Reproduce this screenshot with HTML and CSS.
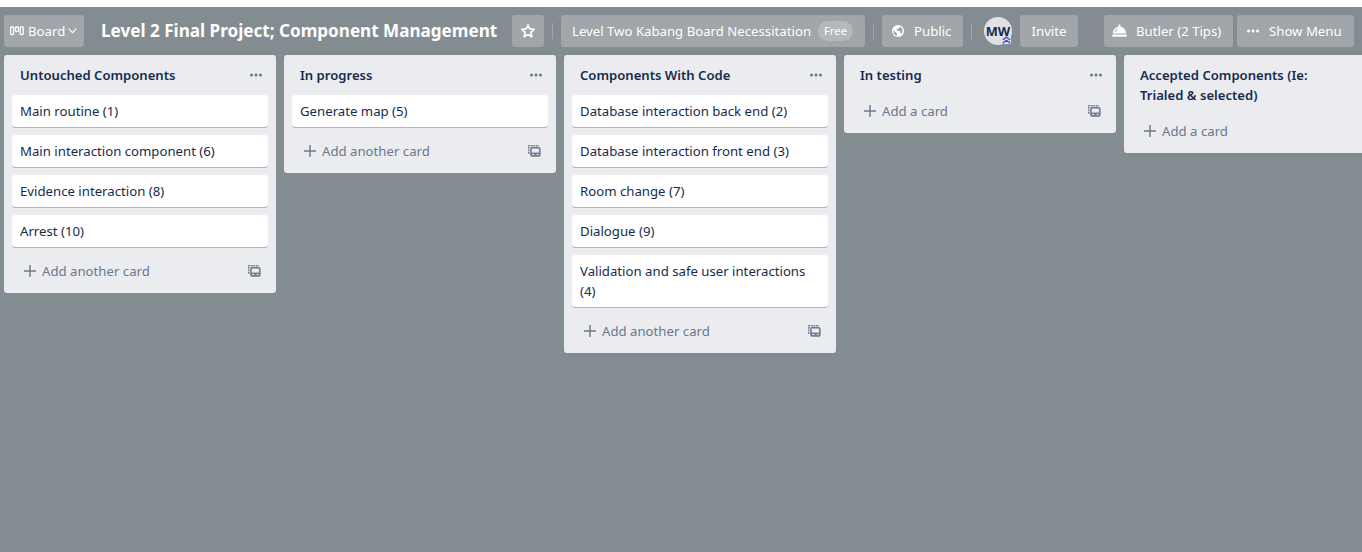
FILE: index.html
```html
<!DOCTYPE html>
<html lang="en">
<head>
<meta charset="utf-8">
<title>Level 2 Final Project; Component Management</title>
<link rel="stylesheet" href="styles.css">
</head>
<body>
<svg class="defs" width="0" height="0" aria-hidden="true">
  <symbol id="dots" viewBox="0 0 14 4"><circle cx="2.5" cy="2" r="1.5"/><circle cx="7" cy="2" r="1.5"/><circle cx="11.5" cy="2" r="1.5"/></symbol>
  <symbol id="plus" viewBox="0 0 12 12"><path d="M6 0v12M0 6h12" fill="none" stroke="currentColor" stroke-width="1.4"/></symbol>
  <symbol id="template" viewBox="0 0 13 12">
    <path d="M.8 8.7V.8H11" fill="none" stroke="currentColor" stroke-width="1.4" stroke-dasharray="1.7 .8"/>
    <rect x="2.9" y="2.7" width="9" height="8.2" rx="1.2" fill="none" stroke="currentColor" stroke-width="1.5"/>
    <path d="M3 7.6h9v3.2H3z" fill="currentColor"/>
    <path d="M4.2 8.9h2.2v1H4.2zM8.6 8.9h2.2v1H8.6z" fill="#ebecf0"/>
  </symbol>
</svg>
<header class="bar">
  <button class="btn btn-board">
    <svg width="14" height="11" viewBox="0 0 14 11" fill="none" stroke="currentColor" stroke-width="1.3"><rect x=".7" y="1" width="2.9" height="7.6" rx=".8"/><rect x="5.5" y="1" width="2.9" height="4.6" rx=".8"/><rect x="10.3" y="1" width="2.9" height="7.6" rx=".8"/></svg>
    <span class="lbl-board">Board</span>
    <svg width="9" height="6" viewBox="0 0 9 6" fill="none" stroke="currentColor" stroke-width="1.1"><path d="M.6.7 4.5 4.6 8.4.7"/></svg>
  </button>
  <h1 class="title">Level 2 Final Project; Component Management</h1>
  <button class="btn btn-star"><svg width="16" height="16" viewBox="0 0 16 16" fill="none" stroke="currentColor" stroke-width="1.7" stroke-linejoin="round"><path d="m8 1.800 1.750 4 4.450.5-3.300 3 .95 4.400L8 11.500l-3.850 2.200.95-4.400-3.300-3 4.450-.5z"/></svg></button>
  <i class="divider"></i>
  <button class="btn btn-team"><span class="lbl-team">Level Two Kabang Board Necessitation</span><span class="pill">Free</span></button>
  <i class="divider"></i>
  <button class="btn btn-public">
    <svg width="12" height="12" viewBox="0 0 12 12"><circle cx="6" cy="6" r="6" fill="currentColor"/><path d="M1.200 5 4.800 8.300v2.500C2.500 10.400 1 8.300 1.200 5zM7.600 1.500 7.300 3.200 4.700 3.900 4.600 5.400 7.800 6l.6 2 1.400.5c1.600-2.300 1.100-5.500-2.200-7z" fill="#a0a6a9"/></svg>
    <span class="lbl-public">Public</span>
  </button>
  <i class="divider"></i>
  <div class="avatar">MW<svg class="rank" width="9" height="8" viewBox="0 0 9 8"><path d="M0 0h9v8H0z" fill="#dfe1e6"/><path d="m.8 4 3.700-2.900L8.200 4M.8 7.200l3.700-2.900 3.700 2.900" fill="none" stroke="#4a3fb5" stroke-width="1.300"/></svg></div>
  <button class="btn btn-invite"><span class="lbl-invite">Invite</span></button>
  <button class="btn btn-butler">
    <svg width="15" height="14" viewBox="0 0 15 14" fill="currentColor"><path d="M.9 9.400C1.100 5.900 3.300 3.300 6.400 2.800V1.400q0-1 1.100-1t1.100 1v1.400c3.100.5 5.300 3.100 5.500 6.600zM.3 10.500h14.400v2.300H.3z"/><path d="M3.300 7.700C3.700 6.300 4.500 5.300 5.700 4.700" fill="none" stroke="#a0a6a9" stroke-width="1"/></svg>
    <span class="lbl-butler">Butler (2 Tips)</span>
  </button>
  <button class="btn btn-menu"><svg width="14" height="4" fill="currentColor"><use href="#dots"/></svg><span class="lbl-menu">Show Menu</span></button>
</header>
<main class="board">
  <section class="list">
    <div class="head"><h2>Untouched Components</h2><svg class="more"><use href="#dots"/></svg></div>
    <div class="card">Main routine (1)</div>
    <div class="card">Main interaction component (6)</div>
    <div class="card">Evidence interaction (8)</div>
    <div class="card">Arrest (10)</div>
    <div class="foot"><svg class="plus"><use href="#plus"/></svg><span>Add another card</span><svg class="tpl"><use href="#template"/></svg></div>
  </section>
  <section class="list">
    <div class="head"><h2>In progress</h2><svg class="more"><use href="#dots"/></svg></div>
    <div class="card">Generate map (5)</div>
    <div class="foot"><svg class="plus"><use href="#plus"/></svg><span>Add another card</span><svg class="tpl"><use href="#template"/></svg></div>
  </section>
  <section class="list">
    <div class="head"><h2>Components With Code</h2><svg class="more"><use href="#dots"/></svg></div>
    <div class="card">Database interaction back end (2)</div>
    <div class="card">Database interaction front end (3)</div>
    <div class="card">Room change (7)</div>
    <div class="card">Dialogue (9)</div>
    <div class="card">Validation and safe user interactions (4)</div>
    <div class="foot"><svg class="plus"><use href="#plus"/></svg><span>Add another card</span><svg class="tpl"><use href="#template"/></svg></div>
  </section>
  <section class="list">
    <div class="head"><h2>In testing</h2><svg class="more"><use href="#dots"/></svg></div>
    <div class="foot"><svg class="plus"><use href="#plus"/></svg><span>Add a card</span><svg class="tpl"><use href="#template"/></svg></div>
  </section>
  <section class="list">
    <div class="head"><h2>Accepted Components (Ie: Trialed &amp; selected)</h2><svg class="more"><use href="#dots"/></svg></div>
    <div class="foot"><svg class="plus"><use href="#plus"/></svg><span>Add a card</span><svg class="tpl"><use href="#template"/></svg></div>
  </section>
</main>
</body>
</html>
```
FILE: styles.css
```css
* { box-sizing: border-box; }
body {
  margin: 0;
  height: 552px;
  overflow: hidden;
  border-top: 7px solid #fff;
  background: #838c91;
  color: #172b4d;
  font: 13.2px/20px "Noto Sans", "Open Sans", sans-serif;
}
.defs { position: absolute; }
svg { flex: none; display: block; }
.bar {
  display: flex;
  align-items: center;
  height: 48px;
  padding: 0 8px 0 4px;
  color: #fff;
}
.btn {
  display: flex;
  align-items: center;
  flex: none;
  height: 32px;
  padding: 0;
  border: 0;
  border-radius: 3px;
  background: #a0a6a9;
  color: #fff;
  font: inherit;
  white-space: nowrap;
}
.btn-board { width: 80px; padding-left: 6px; }
.lbl-board { width: 40px; margin-left: 4px; text-align: left; }
.title {
  width: 396px;
  margin: 0 16px;
  padding-left: 1px;
  font-size: 17.1px;
  font-weight: 700;
  line-height: 32px;
  white-space: nowrap;
}
.btn-star { width: 32px; justify-content: center; }
.divider { flex: none; width: 1px; height: 16px; margin: 0 8px; background: #a0a6a9; }
.btn-team { width: 304px; padding-left: 11px; }
.lbl-team { width: 246px; text-align: left; }
.pill {
  width: 35px;
  height: 20px;
  border-radius: 10px;
  background: #b3b8ba;
  font-size: 11.4px;
  line-height: 20px;
  text-align: center;
}
.btn-public { width: 81px; padding-left: 10px; gap: 10px; }
.avatar {
  position: relative;
  flex: none;
  width: 28px;
  height: 28px;
  margin: 0 8px 0 4px;
  border-radius: 50%;
  background: #dfe1e6;
  color: #172b4d;
  font-size: 12.8px;
  font-weight: 700;
  line-height: 28px;
  text-align: center;
}
.rank { position: absolute; right: 1px; bottom: 1px; }
.btn-invite { width: 58px; justify-content: center; }
.btn-butler { width: 129px; margin-left: auto; padding-left: 8px; gap: 9px; }
.btn-menu { width: 117px; margin-left: 4px; padding-left: 9px; gap: 9px; }
.board { display: flex; align-items: flex-start; gap: 8px; padding-left: 4px; }
.list {
  flex: none;
  width: 272px;
  padding: 0 8px 6px;
  border-radius: 3px;
  background: #ebecf0;
}
.head { display: flex; justify-content: space-between; padding: 10px 5px 10px 8px; }
.head h2 { width: 190px; margin: 0; font-size: 13.1px; font-weight: 600; line-height: 20px; white-space: normal; }
.more { width: 14px; height: 4px; margin-top: 8px; fill: #6b778c; }
.card {
  margin-bottom: 8px;
  padding: 6px 8px;
  border-radius: 3px;
  background: #fff;
  box-shadow: 0 1px 0 #b1b6c5;
}
.foot { display: flex; align-items: center; height: 32px; padding: 0 7px 0 12px; color: #6b778c; }
.plus { width: 12px; height: 12px; margin-right: 6px; }
.tpl { width: 13px; height: 12px; margin-left: auto; }
```
